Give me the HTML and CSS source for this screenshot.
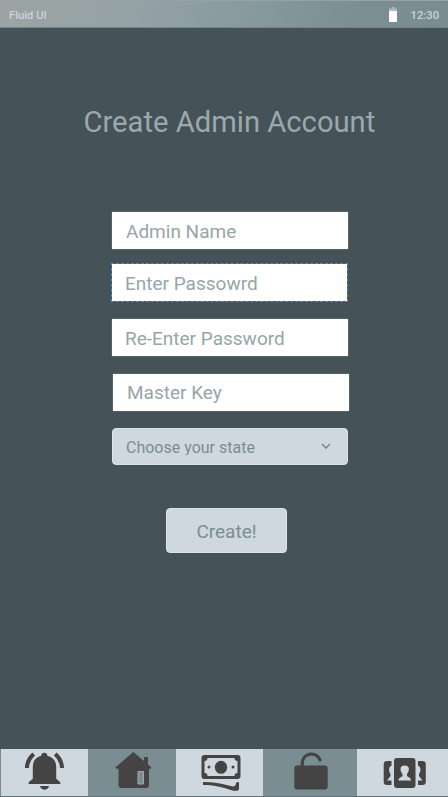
FILE: index.html
```html
<!DOCTYPE html>
<html lang="en">
<head>
<meta charset="utf-8">
<title>Create Admin Account</title>
<link rel="stylesheet" href="styles.css">
</head>
<body>
<div class="screen">
  <header class="status">
    <span>Fluid UI</span>
    <div class="status-right">
      <svg class="battery" viewBox="0 0 8 15" width="8" height="15"><path d="M2.500 0h3v1.500H8V5H0V1.500h2.500z" fill="#a9b8bd"/><rect y="4" width="8" height="11" rx=".6" fill="#fff"/></svg>
      <span>12:30</span>
    </div>
  </header>
  <main class="content">
    <h1 class="title">Create Admin Account</h1>
    <form class="form">
      <div class="field name">Admin Name</div>
      <div class="field password">Enter Passowrd</div>
      <div class="field repeat">Re-Enter Password</div>
      <div class="field master">Master Key</div>
      <div class="select"><span class="select-label">Choose your state</span>
        <svg class="chevron" width="10" height="6" viewBox="0 0 10 6"><path d="M1 1l4 4 4-4" fill="none" stroke="#7d8589" stroke-width="1.500"/></svg>
      </div>
      <button class="create" type="button">Create!</button>
    </form>
  </main>
  <nav class="tabs">
    <div class="tab light">
      <svg viewBox="1 749 87 47"><path d="M28.700 784v-1.700l4.100-3.500V767c0-6 3-10 8.500-11.300a3 3 0 0 1 6 0C53 757 56.200 761 56.200 767v11.800l4.100 3.500v1.700zM40 786h9c-1 5-8 5-9 0z"/><path d="M33.800 754Q27.200 759.500 26.900 768M55.200 754Q61.700 759.500 62 768" fill="none" stroke="#444" stroke-width="4"/></svg>
    </div>
    <div class="tab dark">
      <svg viewBox="88 749 88 47"><path d="M133.300 752l10.700 9v-4h4v7.500l3.500 3-1 1.200H149V785q0 3-3 3h-24.500q-3 0-3-3v-16.300h-2l-1.200-1.200z"/><path d="M138 771.500h5.500V784H138z" fill="#7a8d93" stroke="#9bacb1" stroke-width="1"/></svg>
    </div>
    <div class="tab light">
      <svg viewBox="176 749 87 47"><path fill-rule="evenodd" d="M204.500 755h33q3 0 3 3v18q0 3-3 3h-33q-3 0-3-3v-18q0-3 3-3zM207.500 758q0 3-3 3v12q3 0 3 3h27q0-3 3-3v-12q-3 0-3-3z"/><ellipse cx="221" cy="767.300" rx="6.200" ry="6.500"/><circle cx="209" cy="767" r="1.500"/><circle cx="233" cy="767" r="1.500"/><path d="M203 782c11-.5 21 2 30 4.500q3-.2 3-4l3-.5v6.500q0 2-1.500 2.300h-4C222 787 213 785 203 785z"/></svg>
    </div>
    <div class="tab dark wide">
      <svg viewBox="263 749 94 47"><rect x="294.300" y="765.500" width="33.400" height="24" rx="3"/><path d="M302.300 767v-5a9.200 9.200 0 0 1 17.700-2" fill="none" stroke="#444" stroke-width="3.200" stroke-linecap="round"/></svg>
    </div>
    <div class="tab light last">
      <svg viewBox="357 749 91 47"><g id="side"><path d="M387 761h4.500v4.500q-2.500 1-2.500 4t1.500 4.500v2l-3.500 4.500h4.500v4.500H387q-3.300 0-3.300-3.300v-17.400q0-3.300 3.300-3.300z"/></g><use href="#side" transform="translate(809.500) scale(-1 1)"/><rect x="394" y="758" width="21.500" height="30" rx="3"/><path d="M404.700 765.500c6 0 4.500 6 2.300 8.500v2c1.500 1.500 4 1.500 4 4.500h-12.500c0-3 2.500-3 4-4.500v-2c-2.200-2.500-3.800-8.500 2.200-8.500z" fill="#cfd8df"/></svg>
    </div>
  </nav>
</div>
</body>
</html>
```
FILE: styles.css
```css
* { box-sizing: border-box; }
body { margin: 0; font-family: Roboto, "Liberation Sans", sans-serif; background: #455257; }
.screen { width: 448px; height: 797px; display: flex; flex-direction: column; background: #455257; }
.status {
  height: 28px; flex: none; display: flex; justify-content: space-between; align-items: center;
  padding: 2px 9px 0; font-size: 11.2px; font-weight: 500; color: #cbd5d9;
  background: linear-gradient(100deg, #9ca4a3 0%, #95a2a6 30%, #879a9f 55%, #7a8e94 80%, #788c92 100%);
  border-top: 1px solid #99a2a2; border-bottom: 1px solid #74868b;
}
.status-right { display: flex; align-items: center; gap: 14px; }
.battery { display: block; margin-top: -1px; }
.content { flex: 1; min-height: 0; }
.title { margin: 73px 0 0 83.5px; font-size: 29.2px; line-height: 42px; font-weight: 400; color: #9da8ab; white-space: nowrap; }
.form { margin: 69px 0 0 112px; width: 236px; }
.field { height: 37px; line-height: 39px; padding-left: 14px; background: #fff; color: #98a5a8; font-size: 19px; white-space: nowrap; box-shadow: 0 0 1px #a5adaf; }
.name { line-height: 40px; }
.password { height: 39px; width: 237px; margin: 14px 0 0 -1px; border: 1px dashed #378fe6; padding-left: 13px; background-clip: padding-box; box-shadow: none; }
.repeat { margin-top: 17px; padding-left: 13px; }
.master { margin: 18px -1px 0 1px; line-height: 38px; }
.select {
  height: 37px; margin-top: 17px; padding: 0 16px 0 13px; display: flex; align-items: center; justify-content: space-between;
  background: #cfd8df; border: 1px solid #dce4e8; border-radius: 4px; color: #7b8d93; font-size: 16px;
}
.select-label { height: 17px; line-height: 20px; margin-top: -1px; overflow: hidden; }
.chevron { display: block; margin-top: -1px; }
.create {
  display: block; width: 121px; height: 45px; margin: 43px 0 0 54px; padding: 2px 0 0;
  background: #cfd8df; border: 1px solid #dce4e8; border-radius: 4px;
  color: #7b8d93; font: 400 19px Roboto, "Liberation Sans", sans-serif;
}
.tabs { height: 48px; flex: none; display: flex; padding-left: 1px; background: #788990; border-bottom: 1px solid #61727a; }
.tab { width: 87px; height: 47px; }
.tab svg { display: block; width: 100%; height: 100%; fill: #444; }
.light { background: #cfd8df; }
.dark { width: 88px; background: #7a8d93; }
.wide { width: 94px; }
.last { width: 91px; }
```
